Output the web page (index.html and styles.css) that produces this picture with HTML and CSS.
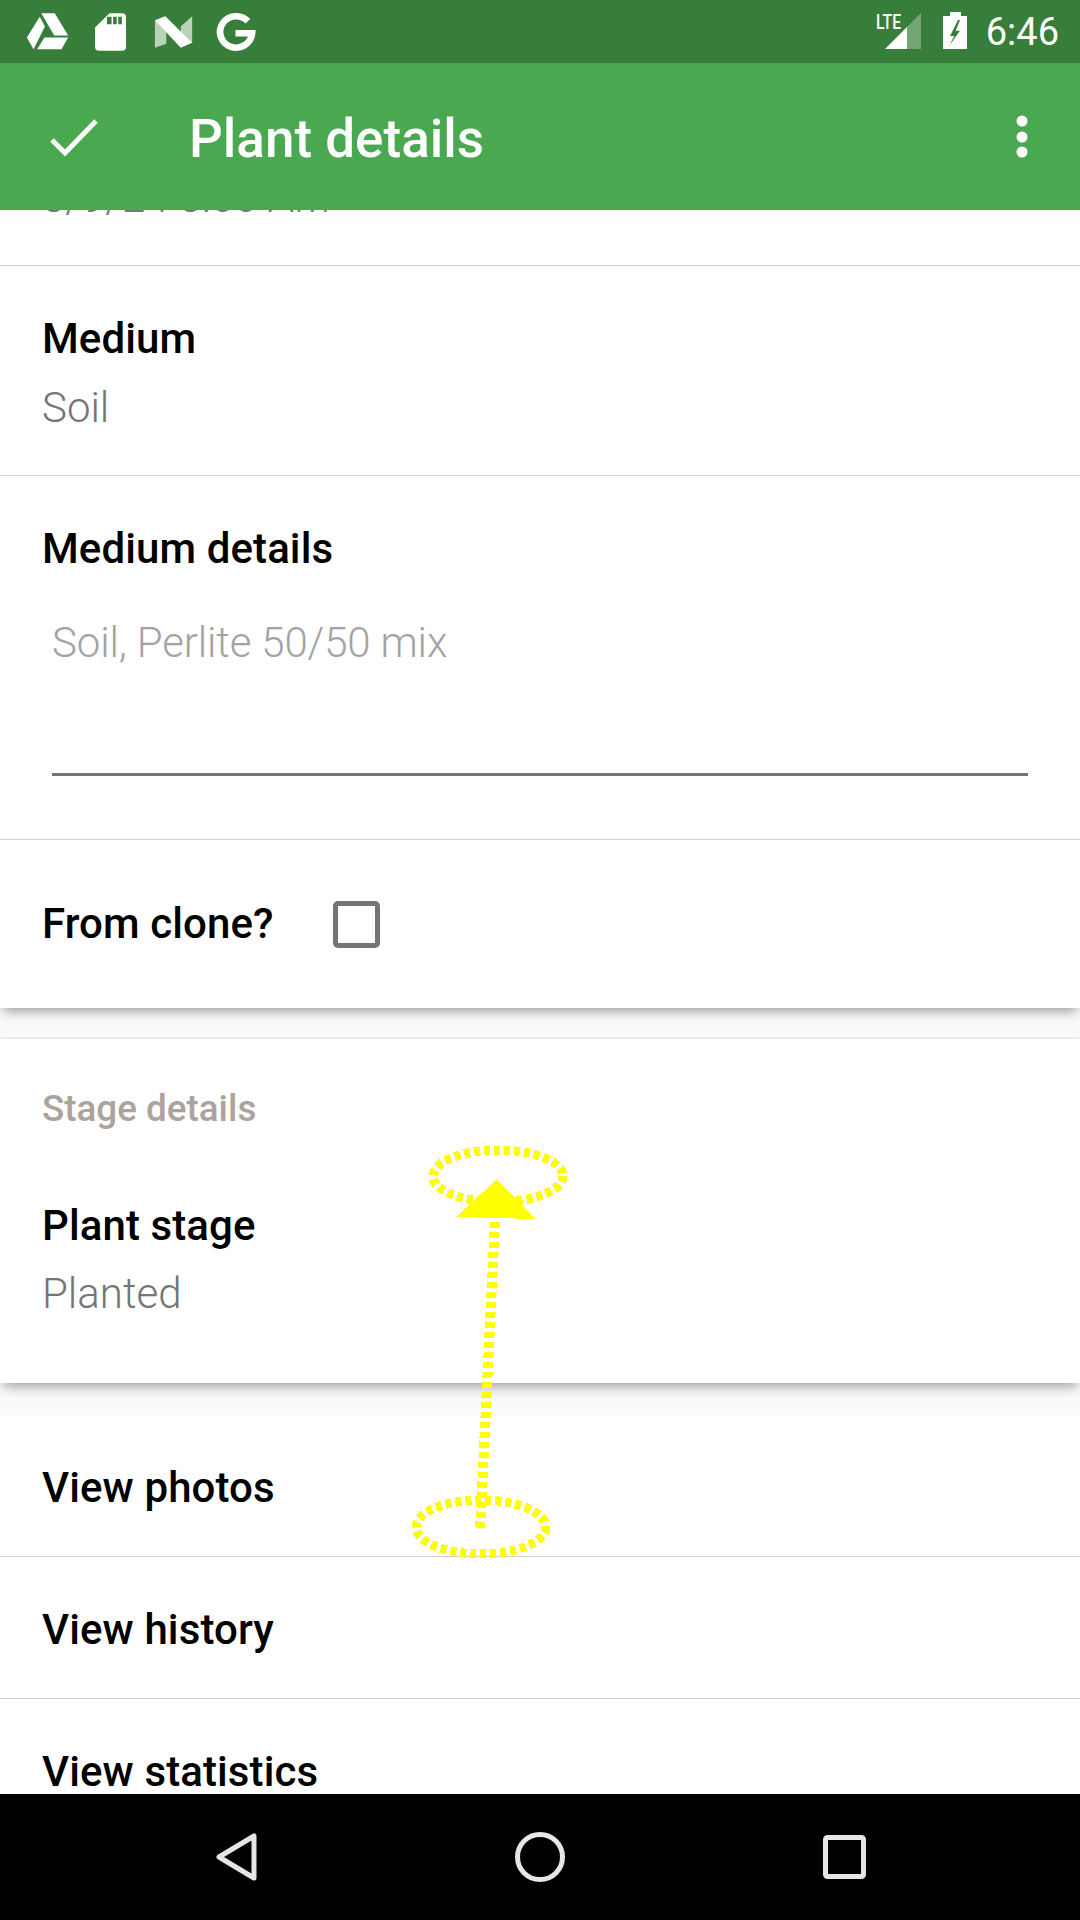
FILE: index.html
```html
<!DOCTYPE html>
<html lang="en" dir="ltr">
    <head>
        <meta charset="utf-8">
        <meta name="viewport" content="width=device-width, initial-scale=1.0" />
        <title>Plant details</title>
        <link rel="stylesheet" href="styles.css">
    </head>
    <body>
        <div class="phone">
            <div class="status">
                <svg class="status-left" width="270" height="63" viewBox="0 0 270 63">
                    <g transform="scale(1.033 1.015)">
                        <!-- drive -->
                        <path fill="#fff" d="M40 13H53L66 35H52.500ZM38.500 16.500L43.500 26L32.500 48.500L26 37ZM43 37H66L59.500 48.500H36Z"/>
                        <!-- sd card -->
                        <path fill="#fff" d="M92 27L106 13H118Q122 13 122 17V46Q122 50 118 50H96Q92 50 92 46Z"/>
                        <path fill="#387e3b" d="M103.500 16.500H108V24H103.500ZM109.500 16.500H113V24H109.500ZM114.500 16.500H118V24H114.500Z"/>
                        <!-- n -->
                        <path fill="#fff" opacity=".65" d="M150 20H161V43L150 47ZM175 26L186 16V42H175Z"/>
                        <path fill="#fff" d="M150 20L160 16L186 42L175 47Z"/>
                        <!-- g -->
                        <path fill="none" stroke="#fff" stroke-width="6.500" d="M240 21A15.500 15.500 0 1 0 244 32.800H228"/>
                    </g>
                </svg>
                <svg class="status-right" width="100" height="63" viewBox="875 0 100 63">
                    <text class="lte" x="876" y="29" textLength="25" lengthAdjust="spacingAndGlyphs">LTE</text>
                    <path fill="#fff" d="M885 49L907 27V49Z"/>
                    <path fill="#fff" opacity=".3" d="M907 27L921 13V49H907Z"/>
                    <path fill="#fff" d="M950 12H961V16H967V49H943V16H950Z"/>
                    <path fill="#387e3b" d="M958 20L950 36H954.300L949 46L960 30.700H955.700L960 20Z"/>
                </svg>
                <span class="clock">6:46</span>
            </div>

            <header class="appbar">
                <svg class="check" width="50" height="44" viewBox="0 0 50 44">
                    <path fill="none" stroke="#fff" stroke-width="5" d="M2 25L15 38L46 6"/>
                </svg>
                <h1>Plant details</h1>
                <svg class="overflow" width="12" height="44" viewBox="0 0 12 44">
                    <circle cx="6" cy="6" r="5.500" fill="#fff"/>
                    <circle cx="6" cy="22" r="5.500" fill="#fff"/>
                    <circle cx="6" cy="37" r="5.500" fill="#fff"/>
                </svg>
            </header>

            <main class="content">
                <section class="card">
                    <div class="row row-clipped"><p class="value">3/9/24 8:00 AM</p></div>
                    <div class="row">
                        <p class="label">Medium</p>
                        <p class="value">Soil</p>
                    </div>
                    <div class="row">
                        <p class="label">Medium details</p>
                        <div class="field">Soil, Perlite 50/50 mix</div>
                    </div>
                    <div class="row row-check">
                        <p class="label">From clone?</p>
                        <span class="checkbox"></span>
                    </div>
                </section>
                <div class="band"></div>
                <section class="card stage">
                    <h2>Stage details</h2>
                    <p class="label">Plant stage</p>
                    <p class="value">Planted</p>
                </section>
                <div class="band band-last"></div>
                <div class="row row-link"><p class="label">View photos</p></div>
                <div class="row row-link"><p class="label">View history</p></div>
                <div class="row row-link"><p class="label">View statistics</p></div>
            </main>

            <nav class="navbar">
                <svg width="60" height="60" viewBox="0 0 60 60">
                    <path fill="none" stroke="#e6e6e6" stroke-width="5" stroke-linejoin="round" d="M13 30L48 9V51Z"/>
                </svg>
                <svg width="60" height="60" viewBox="0 0 60 60">
                    <circle cx="30" cy="30" r="22.500" fill="none" stroke="#e6e6e6" stroke-width="5"/>
                </svg>
                <svg width="60" height="60" viewBox="0 0 60 60">
                    <rect x="11.500" y="10.500" width="38" height="39" rx="2" fill="none" stroke="#e6e6e6" stroke-width="5"/>
                </svg>
            </nav>

            <!-- swipe up gesture drawn over the screen -->
            <svg class="gesture" width="1080" height="1920" viewBox="0 0 1080 1920">
                <ellipse cx="498" cy="1176" rx="65" ry="26"/>
                <path d="M495 1222L480 1530"/>
                <ellipse cx="481" cy="1527" rx="65" ry="27"/>
                <polygon points="497,1179 456,1217 535,1219"/>
            </svg>
        </div>
    </body>
</html>
```

FILE: styles.css
```css
html, body {
    margin: 0;
    padding: 0;
}
body {
    font-family: Roboto, "Liberation Sans", sans-serif;
    background: #fff;
}
p, h1, h2 {
    margin: 0;
}

.phone {
    position: relative;
    display: flex;
    flex-direction: column;
    width: 1080px;
    height: 1920px;
    overflow: hidden;
}

/* status bar */
.status {
    display: flex;
    align-items: center;
    height: 63px;
    flex: none;
    background: #387e3b;
    color: #fff;
}
.status-left {
    flex: none;
}
.status-right {
    flex: none;
    margin-left: auto;
    margin-right: 11px;
}
.lte {
    font-family: Roboto, sans-serif;
    font-size: 21px;
    font-weight: 500;
    fill: #fff;
}
.clock {
    font-size: 38px;
    line-height: 63px;
    margin-right: 21px;
    padding-top: 2px;
}

/* app bar */
.appbar {
    position: relative;
    z-index: 2;
    display: flex;
    align-items: center;
    height: 147px;
    flex: none;
    background: #4aa850;
    color: #fff;
}
.check {
    flex: none;
    margin-left: 50px;
}
.appbar h1 {
    margin-left: 89px;
    padding-top: 4px;
    font-size: 53px;
    font-weight: 500;
    line-height: 60px;
}
.overflow {
    flex: none;
    margin-left: auto;
    margin-right: 52px;
}

/* scrolling content */
.content {
    flex: 1;
    min-height: 0;
    overflow: hidden;
    background: #fff;
}
.card {
    position: relative;
    z-index: 1;
    background: #fff;
    box-shadow: 0 6px 12px -3px rgba(0,0,0,.4);
}
.row {
    padding: 48px 42px 42px 42px;
    border-bottom: 1px solid #cfcfcf;
}
.row-clipped {
    display: flex;
    flex-direction: column;
    box-sizing: border-box;
    padding: 0 42px;
    height: 56px;
}
.row-clipped .value {
    margin-top: -37px;
}
.label {
    font-size: 42px;
    font-weight: 500;
    letter-spacing: .1px;
    line-height: 50px;
    color: #000;
}
.value {
    margin-top: 19px;
    font-size: 42px;
    font-weight: 300;
    line-height: 50px;
    color: #757575;
}
.field {
    margin: 44px 10px 21px 10px;
    padding-bottom: 105px;
    border-bottom: 3px solid #757575;
    font-size: 42px;
    font-weight: 300;
    letter-spacing: -.15px;
    line-height: 50px;
    color: #a3a3a3;
}
.row-check {
    display: flex;
    align-items: center;
    gap: 59px;
    height: 168px;
    box-sizing: border-box;
    padding: 0 42px;
    border-bottom: 0;
}
.checkbox {
    width: 37px;
    height: 37px;
    border: 5px solid #757575;
    border-radius: 5px;
}
.band {
    height: 31px;
    background: #fafafa;
    box-shadow: inset 0 -2px 2px -1px rgba(0,0,0,.08);
}
.band-last {
    height: 32px;
    box-shadow: none;
}
.stage {
    padding: 45px 42px 64px 42px;
}
.stage h2 {
    margin-bottom: 67px;
    font-size: 36.800px;
    font-weight: 500;
    line-height: 50px;
    color: #aba39c;
}
.stage .value {
    margin-top: 18px;
}
.row-link {
    padding-bottom: 43px;
}

/* nav bar */
.navbar {
    display: flex;
    align-items: center;
    justify-content: center;
    gap: 244px;
    height: 126px;
    flex: none;
    background: #000;
}

.gesture {
    position: absolute;
    left: 0;
    top: 0;
    z-index: 3;
    pointer-events: none;
    shape-rendering: crispEdges;
}
.gesture ellipse {
    fill: none;
    stroke: #ff0;
    stroke-width: 9;
    stroke-dasharray: 6 4;
}
.gesture path {
    fill: none;
    stroke: #ff0;
    stroke-width: 10;
    stroke-dasharray: 6 4;
}
.gesture polygon {
    fill: #ff0;
}
```
